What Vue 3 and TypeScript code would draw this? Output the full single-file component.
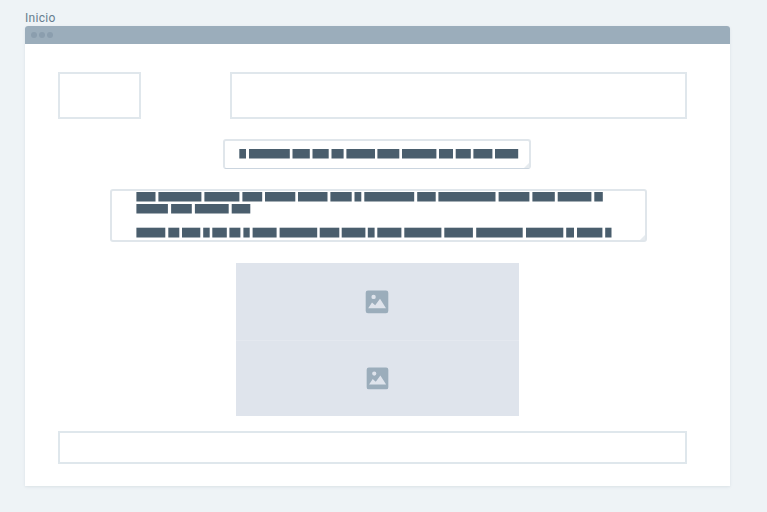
<script setup lang="ts">
type Bar = [number, number]
interface Line { bars: Bar[]; top: number; height: number }

// Word positions are relative to the left edge of each text run.
const heading: Line = {
  top: 0,
  height: 9.5,
  bars: [[0.3, 7], [10, 50.8], [53.5, 70.8], [73.5, 89.7], [92.5, 104.6], [107.4, 136], [138.4, 160.3], [163, 197.4], [200, 214], [216.7, 231.8], [234.4, 253.4], [256, 279.2]],
}

const paragraph: Line[] = [
  {
    top: 0,
    height: 9.5,
    bars: [[0.4, 19.5], [22.4, 65.4], [68.4, 103.4], [106.4, 126.2], [129, 159.3], [162, 191.5], [194.4, 215.7], [218.5, 225.3], [228.3, 278.2], [281.2, 299.7], [302.4, 359.5], [362.6, 393.4], [396.4, 418.8], [421.7, 455.4], [458.3, 466.8]],
  },
  {
    top: 12,
    height: 9.5,
    bars: [[0.4, 31.9], [35.1, 55.8], [58.9, 92.7], [95.7, 114.3]],
  },
  {
    top: 35.7,
    height: 9.8,
    bars: [[0.4, 29.3], [32.3, 43.3], [46, 64.3], [67.2, 73.7], [76.3, 90.8], [93.4, 104.4], [107.4, 113.7], [116.6, 140.6], [143.6, 181.2], [183.7, 203.3], [205.7, 229.4], [231.8, 238.6], [241.3, 265.4], [268.3, 305.4], [308.3, 336.9], [340.2, 386.7], [390, 427.3], [430.2, 438], [441, 466.4], [469.2, 475.5]],
  },
]
</script>

<template>
  <div class="canvas">
    <div class="label">Inicio</div>
    <main class="window">
      <header class="bar"><i></i><i></i><i></i></header>
      <div class="content">
        <div class="top-row">
          <div class="box logo"></div>
          <div class="box nav"></div>
        </div>
        <section class="field heading">
          <svg width="282" height="12">
            <rect v-for="(b, i) in heading.bars" :key="i" :x="b[0]" :y="heading.top" :width="b[1] - b[0]" :height="heading.height" />
          </svg>
          <svg class="grip" width="5" height="5"><path d="M0 5L5 0V5Z" /></svg>
        </section>
        <section class="field copy">
          <svg width="480" height="48">
            <g v-for="(line, n) in paragraph" :key="n">
              <rect v-for="(b, i) in line.bars" :key="i" :x="b[0]" :y="line.top" :width="b[1] - b[0]" :height="line.height" />
            </g>
          </svg>
          <svg class="grip" width="5" height="5"><path d="M0 5L5 0V5Z" /></svg>
        </section>
        <div class="gallery">
          <div v-for="n in 2" :key="n" class="picture">
            <svg width="24" height="24" viewBox="0 0 24 24">
              <path fill="#9badbb" fill-rule="evenodd" d="M3 .5H21Q23.3 .5 23.3 2.8V21Q23.3 23.3 21 23.3H3Q.7 23.3 .7 21V2.8Q.7 .5 3 .5ZM8.6 4.7A2.2 2.2 0 1 0 8.6 9.1A2.2 2.2 0 1 0 8.6 4.7ZM3.2 18.2H21L15 8.8L10.2 15.3L7 12.5Z" />
            </svg>
          </div>
        </div>
        <footer class="box foot"></footer>
      </div>
    </main>
  </div>
</template>

<style>
body {
  background: #eef3f6;
}
</style>

<style scoped>
.canvas {
  box-sizing: border-box;
  width: 767px;
  height: 512px;
  padding: 10px 0 0 25px;
  overflow: hidden;
  background: #eef3f6;
}
.label {
  height: 16px;
  font: 400 12px/16px Roboto, sans-serif;
  letter-spacing: 0.3px;
  color: #657d8e;
}
.window {
  width: 705.4px;
  height: 460px;
  border-radius: 3px 3px 0 0;
  background: #fff;
  box-shadow: 0 1px 3px rgba(80, 105, 120, 0.12);
}
.bar {
  display: flex;
  align-items: center;
  gap: 2px;
  box-sizing: border-box;
  height: 18px;
  padding-left: 6px;
  border-radius: 3px 3px 0 0;
  background: #9badbb;
}
.bar i {
  width: 6px;
  height: 6px;
  border-radius: 50%;
  background: #8b9eae;
}
.content {
  display: flex;
  flex-direction: column;
  padding: 28px 0 0 33px;
}
.box {
  box-sizing: border-box;
  border: 2px solid #e0e7ec;
}
.top-row {
  display: flex;
  gap: 89px;
}
.logo {
  width: 83px;
  height: 47px;
}
.nav {
  width: 457px;
  height: 47px;
}
.field {
  position: relative;
  box-sizing: border-box;
  border: 2px solid #e0e6eb;
  border-radius: 3px;
}
.field svg {
  display: block;
  fill: #4a5e6d;
}
.field .grip {
  position: absolute;
  right: 0;
  bottom: 0;
  fill: #e6ebef;
}
.heading {
  width: 308px;
  height: 30px;
  margin: 20px 0 0 165px;
  padding: 8px 0 0 14px;
  border-bottom: 1px solid #cbd5df;
}
.copy {
  width: 537px;
  height: 53px;
  margin: 20px 0 0 52px;
  padding: 1px 0 0 24px;
}
.gallery {
  width: 283px;
  margin: 21px 0 0 178px;
}
.picture {
  display: flex;
  align-items: center;
  justify-content: center;
  box-sizing: border-box;
  height: 77px;
  padding: 0 1px 0 0;
  background: #dfe4ec;
}
.picture svg {
  width: 24px;
  height: 24px;
}
.picture + .picture {
  height: 76px;
  border-top: 1px solid #e4e8ef;
  padding-bottom: 0;
}
.picture + .picture svg {
  width: 23px;
  height: 23px;
}
.foot {
  width: 629px;
  height: 33px;
  margin-top: 15px;
  border-color: #dfe7ec;
}
</style>
